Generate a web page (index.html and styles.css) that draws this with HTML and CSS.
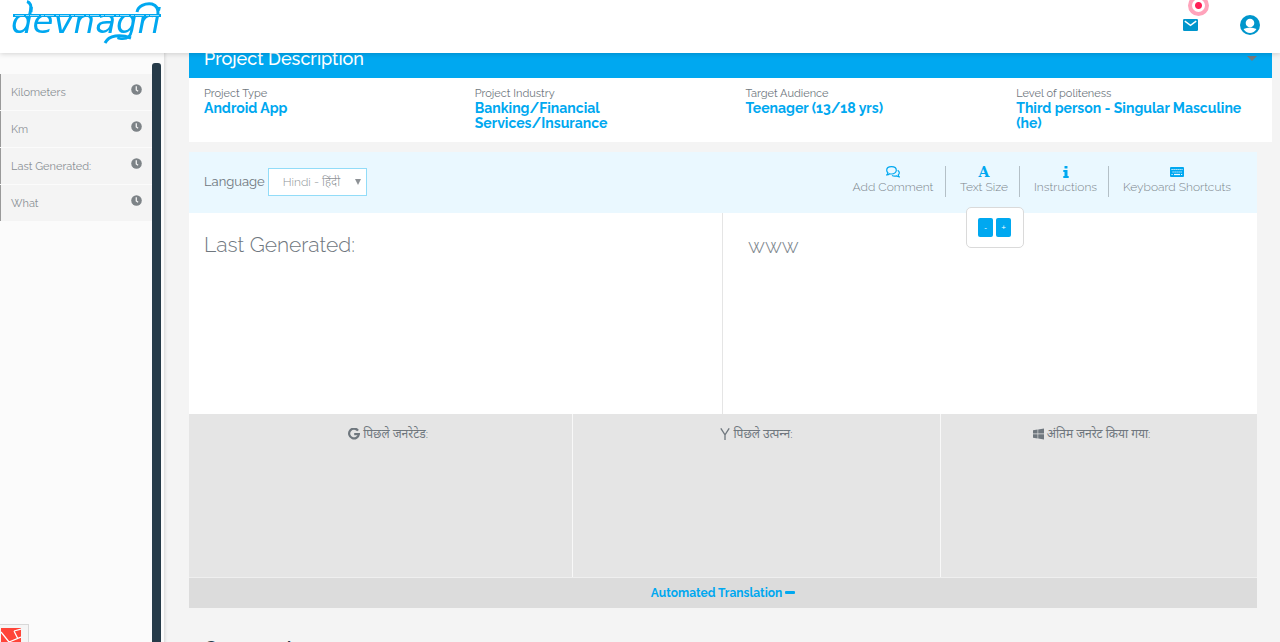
FILE: index.html
```html
<!DOCTYPE html>
<html lang="en">
<head>
<meta charset="utf-8">
<title>Devnagri</title>
<meta name="viewport" content="width=device-width, initial-scale=1">
<link rel="stylesheet" href="styles.css">
</head>
<body>
<svg class="sprite" aria-hidden="true">
  <symbol id="clock" viewBox="0 0 24 24"><circle cx="12" cy="12" r="11.5" fill="currentColor"/><path d="M11.5 5v8l4 3" fill="none" stroke="#f5f5f5" stroke-width="2.8"/></symbol>
</svg>

<header class="topbar">
  <a class="brand" href="#" aria-label="Devnagri">
    <svg class="logo" viewBox="0 0 154 46">
      <text class="logo-text" x="1" y="33">devnagri</text>
      <path d="M3 15.500H151" stroke="#00a8f0" stroke-width="3"/>
      <path d="M5 15.500H150" stroke="#fff" stroke-width="1" stroke-dasharray="9 2 3 1" opacity=".6"/>
      <path d="M127 12C128 6 135 3 142 4Q149 6 148 15" fill="none" stroke="#00a8f0" stroke-width="3"/>
      <path d="M95 43C99 35 110 34 121 38" fill="none" stroke="#00a8f0" stroke-width="3"/>
      <path d="M17 1.500Q22 3 21 12" fill="none" stroke="#00a8f0" stroke-width="3"/>
    </svg>
  </a>
  <nav class="account">
    <a class="mail" href="#" aria-label="Messages">
      <svg width="15" height="12" viewBox="0 0 15 12"><rect width="15" height="12" rx="1.200" fill="#0096cc"/><path d="M1.800 2.200 7.500 6.300l5.700-4.100" fill="none" stroke="#fff" stroke-width="1.500"/></svg>
      <span class="pulse"></span>
    </a>
    <a class="user" href="#" aria-label="Account">
      <svg width="20" height="20" viewBox="0 0 20 20"><circle cx="10" cy="10" r="10" fill="#0096cc"/><circle cx="10" cy="8" r="4.300" fill="#fff"/><path d="M3.500 14Q10 11 16.500 14Q14 18 10 18T3.500 14Z" fill="#fff"/></svg>
    </a>
  </nav>
</header>

<div class="layout">
  <aside class="sidebar">
    <ul class="strings">
      <li><a href="#">Kilometers</a><svg class="clock"><use href="#clock"/></svg></li>
      <li><a href="#">Km</a><svg class="clock"><use href="#clock"/></svg></li>
      <li><a href="#">Last Generated:</a><svg class="clock"><use href="#clock"/></svg></li>
      <li><a href="#">What</a><svg class="clock"><use href="#clock"/></svg></li>
    </ul>
    <div class="scroll-track"></div>
  </aside>

  <main class="content">
    <section class="project">
      <h2 class="project-title">Project Description <span class="caret"></span></h2>
      <dl class="facts">
        <div><dt>Project Type</dt><dd>Android App</dd></div>
        <div><dt>Project Industry</dt><dd>Banking/Financial Services/Insurance</dd></div>
        <div><dt>Target Audience</dt><dd>Teenager (13/18 yrs)</dd></div>
        <div><dt>Level of politeness</dt><dd>Third person - Singular Masculine (he)</dd></div>
      </dl>
    </section>

    <section class="editor">
      <div class="toolbar">
        <label for="language">Language</label>
        <span class="select-wrap">
          <select id="language"><option>Hindi - हिंदी</option></select>
        </span>
        <div class="tools">
          <button class="tool" type="button">
            <svg width="14" height="12" viewBox="0 0 14 12" fill="none" stroke="currentColor" stroke-width="1.200"><path d="M5.500.700C8.300.700 10.300 2.300 10.300 4.300S8.300 8 5.500 8Q4.500 8 3.700 7.700Q2.500 8.700.800 8.900Q1.700 8 1.900 6.800Q.700 5.800.700 4.300C.700 2.300 2.700.700 5.500.700Z"/><path d="M11.700 4.200Q13.400 5.300 13.300 7Q13.200 8.200 12.200 9Q12.400 10 13.300 10.900Q11.600 10.800 10.600 9.900Q8 10.600 6 9.500"/></svg>
            <span>Add Comment</span>
          </button>
          <div class="tool-slot">
            <button class="tool" type="button">
              <b class="letter-icon" aria-hidden="true">A</b>
              <span>Text Size</span>
            </button>
            <div class="size-menu">
              <button type="button" aria-label="Smaller text">-</button>
              <button type="button" aria-label="Larger text">+</button>
            </div>
          </div>
          <button class="tool" type="button">
            <svg width="6" height="12" viewBox="0 0 6 12" fill="currentColor"><rect x="1.500" width="3" height="2.600" rx=".5"/><path d="M.3 4h4.200v6H5.700v2H.3v-2h1.200V6H.3z"/></svg>
            <span>Instructions</span>
          </button>
          <button class="tool" type="button">
            <svg width="14" height="12" viewBox="0 0 14 12"><rect y="1" width="14" height="10" rx="1" fill="currentColor"/><path d="M1.500 3.500h11M2.500 6h10M1.500 8.500h1.500M11 8.500h1.500" stroke="#eaf8ff" stroke-width="1.200" stroke-dasharray="1.200 .8"/><path d="M4 8.500h6" stroke="#eaf8ff" stroke-width="1.200"/></svg>
            <span>Keyboard Shortcuts</span>
          </button>
        </div>
      </div>

      <div class="panes">
        <p class="source">Last Generated:</p>
        <textarea class="target" aria-label="Translation">www</textarea>
      </div>

      <div class="suggestions">
        <p><svg width="12" height="12" viewBox="0 0 12 12"><path d="M10 2.600A4.900 4.900 0 1 0 10.900 6.100H6.200" fill="none" stroke="currentColor" stroke-width="2.200"/></svg> पिछले जनरेटेड:</p>
        <p><svg width="10" height="12" viewBox="0 0 10 12"><path d="M.800.300 5 6.800 9.200.300M5 6.500V12" fill="none" stroke="currentColor" stroke-width="1.300"/></svg> पिछले उत्पन्&zwj;न:</p>
        <p><svg width="11" height="12" viewBox="0 0 11 12" fill="currentColor"><path d="M0 2.200 4.600 1.500v4.100H0zM5.200 1.400 11 .600v5H5.200zM0 6.300h4.600v4.200L0 9.800zM5.200 6.300H11v5.100l-5.800-.8z"/></svg> अंतिम जनरेट किया गया:</p>
      </div>
      <button class="auto" type="button">Automated Translation <span class="minus"></span></button>
    </section>

    <h3 class="comments">Comments</h3>
  </main>
</div>

<a class="debug" href="#" aria-label="Debug bar">
  <svg width="20" height="20" viewBox="0 0 20 20"><path d="M0 0h20v20H0z" fill="#ff4438"/><path d="M0 4 8 14 20 9M13 3l4 8M13 3l7-2M8 14 0 17M8 14v6" fill="none" stroke="#fff" stroke-width="1.300"/></svg>
</a>
</body>
</html>
```
FILE: styles.css
```css
* { box-sizing: border-box; }

body {
  margin: 0;
  height: 100vh;
  overflow: hidden;
  background: #f4f4f4;
  color: #6f777e;
  font-family: Raleway, Lato, "Noto Sans Devanagari", sans-serif;
  font-size: 12px;
}

button, select, textarea { font: inherit; color: inherit; }
button { border: 0; background: none; padding: 0; cursor: pointer; }
a { color: inherit; text-decoration: none; }
.sprite { position: absolute; width: 0; height: 0; }

.topbar {
  position: fixed;
  inset: 0 0 auto;
  z-index: 5;
  height: 53px;
  display: flex;
  justify-content: space-between;
  background: #fff;
  box-shadow: 0 1px 5px rgba(0, 0, 0, .16);
}
.brand { padding-left: 10px; }
.logo { display: block; width: 154px; height: 46px; }
.logo-text {
  font-family: "DejaVu Sans", sans-serif;
  font-size: 34px;
  font-style: italic;
  fill: #00a8f0;
}
.account { display: flex; align-items: center; gap: 42px; padding: 0 20px 3px 0; }
.account svg { display: block; }
.mail { position: relative; }
.pulse {
  position: absolute;
  left: 5px;
  bottom: 15px;
  width: 21px;
  height: 21px;
  border: 4px solid #ffa3bb;
  border-radius: 50%;
  background: radial-gradient(circle, #ff1f57 0 3px, #fff 4px);
}

.layout { display: flex; min-height: 100vh; }

.sidebar {
  flex: none;
  width: 164px;
  display: flex;
  padding-right: 3px;
  background: #fbfbfb;
  box-shadow: 1px 0 3px rgba(0, 0, 0, .12);
}
.strings { flex: 1; margin: 0; padding: 74px 0 0; list-style: none; }
.strings li {
  display: flex;
  justify-content: space-between;
  height: 36px;
  margin-bottom: 1px;
  padding: 10px 10px 0;
  border-left: 1px solid #999;
  background: #f4f4f4;
  color: #8a9095;
  font-size: 11px;
  line-height: 18px;
}
.clock { width: 11px; height: 11px; color: #7d8387; }
.scroll-track { width: 9px; margin-top: 63px; border-radius: 3px 3px 0 0; background: #263b49; }

.content { flex: 1; min-width: 0; padding: 38px 8px 0 25px; }

.project { background: #fff; }
.project-title {
  display: flex;
  justify-content: space-between;
  align-items: center;
  height: 40px;
  margin: 0;
  padding: 0 15px;
  background: #00a8f0;
  color: #fff;
  font-size: 18px;
  font-weight: 500;
}
.caret { border: 5px solid transparent; border-top-color: #75797d; border-bottom: 0; }
.facts { display: grid; grid-template-columns: repeat(4, 1fr); margin: 0; padding: 9px 0 11px; }
.facts div { padding: 0 15px; }
.facts dt { font-size: 11px; line-height: 14px; }
.facts dd { margin: 0; color: #00a8f0; font-size: 14px; font-weight: 700; line-height: 15px; }

.editor { margin: 10px 15px 0 0; background: #fff; }

.toolbar {
  display: flex;
  align-items: center;
  height: 61px;
  padding: 0 15px 2px;
  background: #eaf8ff;
}
.toolbar label { font-size: 13px; }
.select-wrap { position: relative; margin-left: 3px; }
.select-wrap::after {
  content: "";
  position: absolute;
  right: 6px;
  top: 11px;
  border: 3px solid transparent;
  border-top: 6px solid #8e9296;
  border-bottom: 0;
  pointer-events: none;
}
.select-wrap select {
  display: block;
  width: 99px;
  height: 28px;
  padding: 0 14px;
  border: 1px solid #92dcf8;
  border-radius: 0;
  appearance: none;
  background: #fff;
  color: #8e9296;
  font-weight: 300;
}

.tools { display: grid; grid-template-columns: 93px 74px 89px 122px; margin-left: auto; margin-right: 11px; }
.tool {
  display: flex;
  flex-direction: column;
  align-items: center;
  width: 100%;
  height: 31px;
  padding-right: 12px;
  color: #00a8f0;
  white-space: nowrap;
}
.tools > * { border-right: 1px solid #b4c0c7; }
.tools > :last-child { border-right: 0; padding: 0 0 0 14px; }
.tools > :nth-child(3), .tool-slot .tool { padding: 0 11px 0 14px; }
.tool span { color: #7d868d; font-size: 12px; font-weight: 300; line-height: 18px; }
.letter-icon { height: 12px; font: 700 14px/12px "DejaVu Serif", serif; }
.tool-slot { position: relative; }
.size-menu {
  position: absolute;
  top: 41px;
  left: 20px;
  display: flex;
  gap: 3px;
  padding: 10px 12px 10px 11px;
  border: 1px solid #dadada;
  border-radius: 5px;
  background: #fff;
}
.size-menu button {
  width: 15px;
  height: 19px;
  border-radius: 2px;
  background: #00a8f0;
  color: #fff;
  font-family: "Liberation Sans", sans-serif;
  font-size: 8px;
}

.panes { display: grid; grid-template-columns: 1fr 1fr; height: 201px; }
.source {
  margin: 0;
  padding: 18px 15px;
  border-right: 1px solid #e5e5e5;
  font-size: 21px;
  font-weight: 300;
  line-height: 28px;
}
.target {
  display: block;
  padding: 19px 25px;
  border: 0;
  resize: none;
  background: transparent;
  color: #7d868d;
  font-size: 21px;
  font-weight: 300;
  line-height: 28px;
}

.suggestions { display: grid; grid-template-columns: 384fr 368fr 316fr; height: 163px; background: #e5e5e5; text-align: center; }
.suggestions p { margin: 0; padding-top: 11px; border-right: 1px solid #f8f8f8; line-height: 18px; }
.suggestions p:first-child { padding-left: 15px; }
.suggestions p:last-child { padding-right: 15px; border-right: 0; }
.suggestions svg { vertical-align: -2px; }

.auto {
  display: block;
  width: 100%;
  height: 31px;
  border-top: 1px solid #efefef;
  background: #dcdcdc;
  color: #00a8f0;
  font-size: 12px;
  font-weight: 700;
}
.minus { display: inline-block; width: 10px; height: 3px; border-radius: 1px; background: #00a8f0; vertical-align: 3px; }

.comments { margin: 26px 15px 0; color: #263b49; font-size: 19px; font-weight: 600; line-height: 26px; }

.debug {
  position: fixed;
  left: 0;
  bottom: 0;
  width: 29px;
  height: 18px;
  padding: 3px 0 0 1px;
  border: 1px solid #d8d8d8;
  border-width: 1px 1px 0 0;
  background: #f5f5f5;
  overflow: hidden;
}
```
